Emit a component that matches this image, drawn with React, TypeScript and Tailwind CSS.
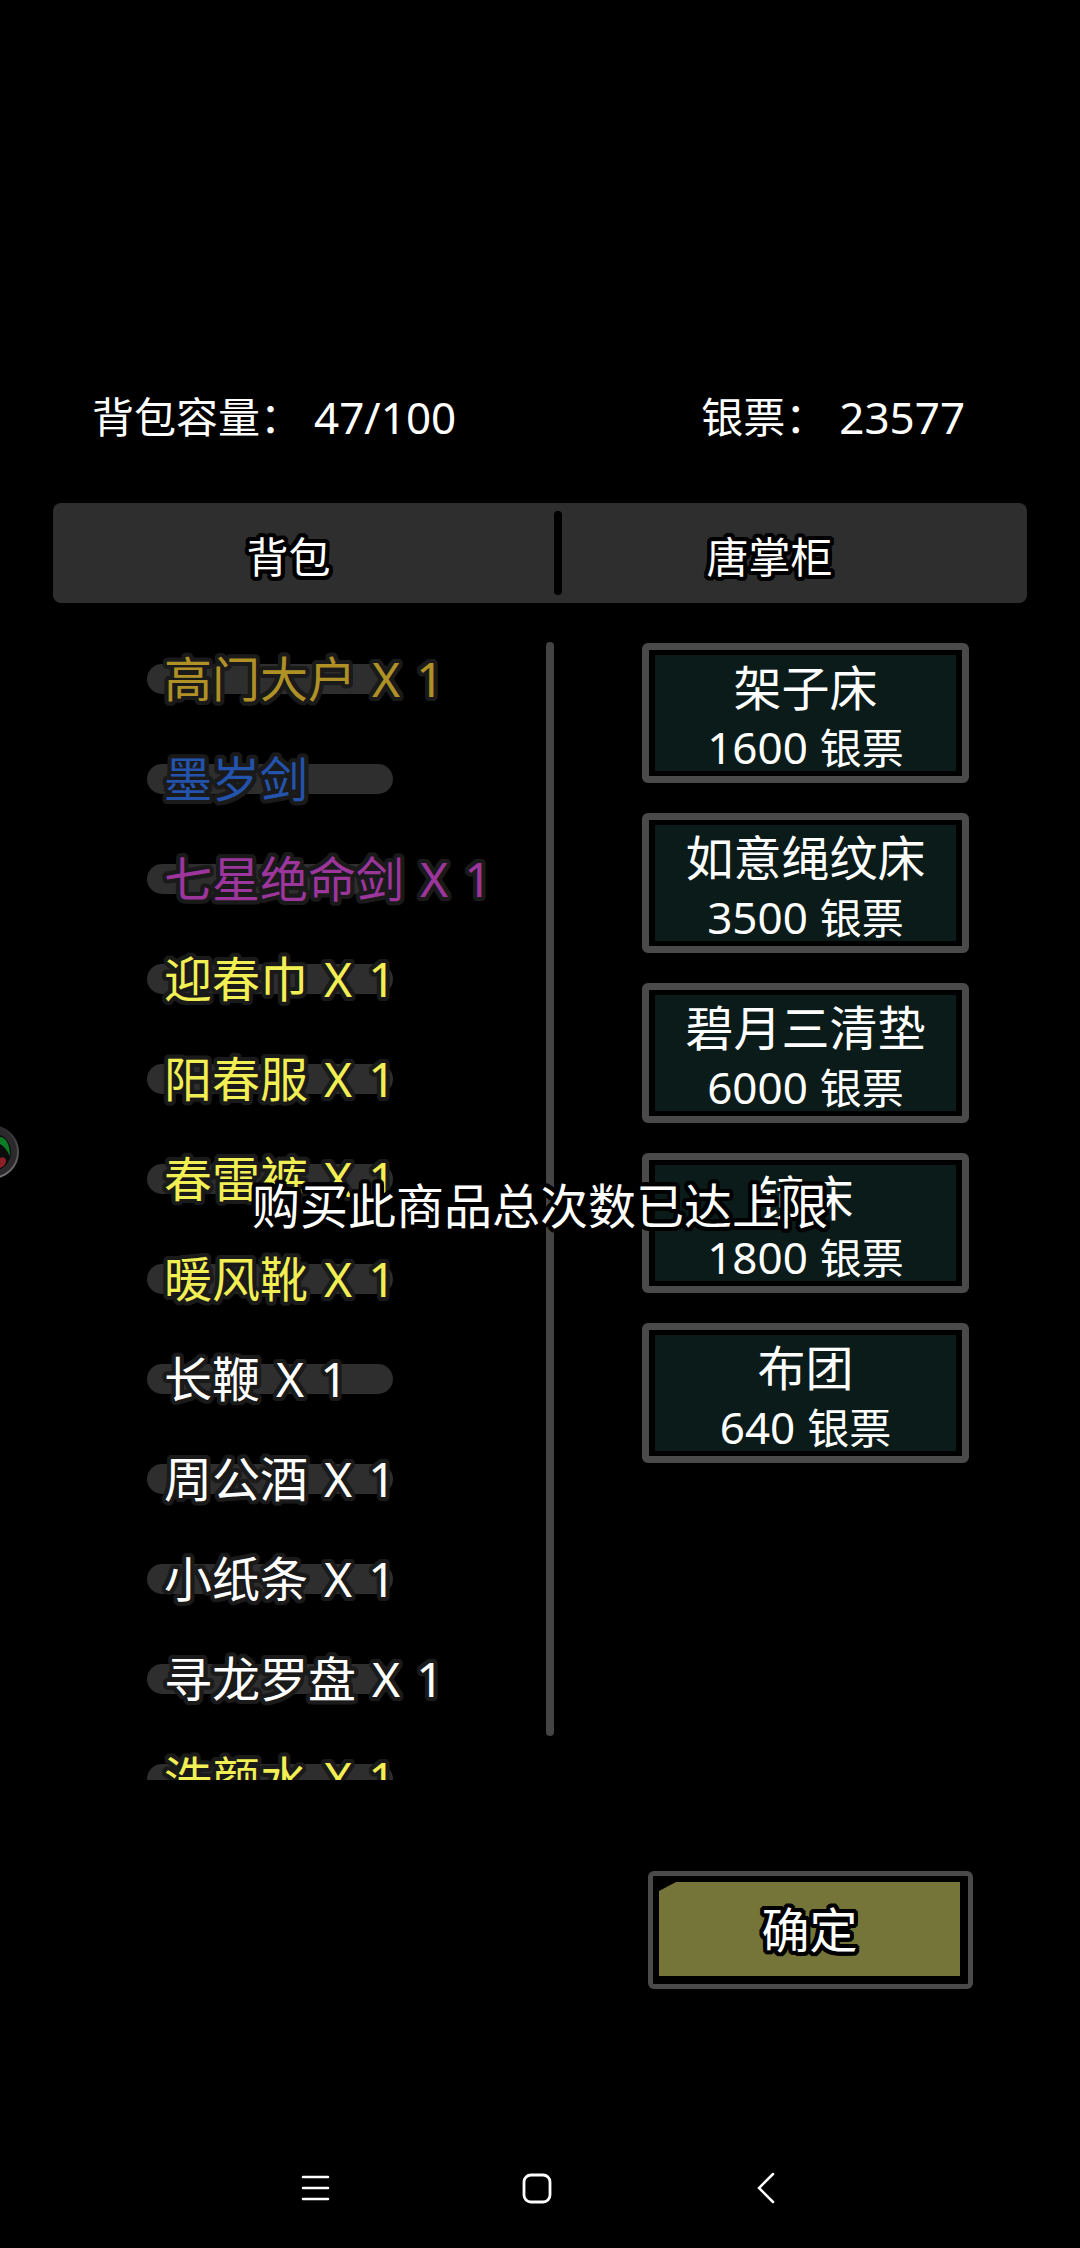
import { ReactNode } from 'react'
import clsx from 'clsx'

type BagItem = { name: string; count?: number; color: string }
type Goods = { name: string; price: number }

const bagItems: BagItem[] = [
  { name: '高门大户', count: 1, color: 'text-[#af9126]' },
  { name: '墨岁剑', color: 'text-[#2453ac]' },
  { name: '七星绝命剑', count: 1, color: 'text-[#9c359c]' },
  { name: '迎春巾', count: 1, color: 'text-[#f2ef55]' },
  { name: '阳春服', count: 1, color: 'text-[#f2ef55]' },
  { name: '春雷裤', count: 1, color: 'text-[#f2ef55]' },
  { name: '暖风靴', count: 1, color: 'text-[#f2ef55]' },
  { name: '长鞭', count: 1, color: 'text-white' },
  { name: '周公酒', count: 1, color: 'text-white' },
  { name: '小纸条', count: 1, color: 'text-white' },
  { name: '寻龙罗盘', count: 1, color: 'text-white' },
  { name: '洗颜水', count: 1, color: 'text-[#f2ef55]' },
]

const goods: Goods[] = [
  { name: '架子床', price: 1600 },
  { name: '如意绳纹床', price: 3500 },
  { name: '碧月三清垫', price: 6000 },
  { name: '镜床', price: 1800 },
  { name: '布团', price: 640 },
]

// rounded outline made of hard shadows, coloured by --edge
const outline =
  '[text-shadow:4px_0_var(--edge),-4px_0_var(--edge),0_4px_var(--edge),0_-4px_var(--edge),3px_3px_var(--edge),-3px_3px_var(--edge),3px_-3px_var(--edge),-3px_-3px_var(--edge),4px_2px_var(--edge),-4px_2px_var(--edge),4px_-2px_var(--edge),-4px_-2px_var(--edge),2px_4px_var(--edge),-2px_4px_var(--edge),2px_-4px_var(--edge),-2px_-4px_var(--edge),2px_0_var(--edge),-2px_0_var(--edge),0_2px_var(--edge),0_-2px_var(--edge)]'

function Stat({ label, value }: { label: string; value: string }) {
  return (
    <p className="flex gap-3">
      <span>{label}</span>
      <span className="text-[44px]">{value}</span>
    </p>
  )
}

function Tab({ className, children }: { className: string; children: ReactNode }) {
  return (
    <button
      type="button"
      className={clsx('flex-1 pt-1.5 text-[42px] [--edge:#000]', outline, className)}
    >
      {children}
    </button>
  )
}

function BagRow({ item }: { item: BagItem }) {
  return (
    <li className="flex h-25 items-center">
      <button
        type="button"
        className={clsx(
          'flex h-[30px] w-[246px] items-center gap-4 rounded-full bg-[#2e2e2e] pl-[17px] text-[48px] whitespace-nowrap [--edge:#1a1a1a]',
          outline,
          item.color
        )}
      >
        <span>{item.name}</span>
        {item.count && (
          <>
            <span>X</span>
            <span>{item.count}</span>
          </>
        )}
      </button>
    </li>
  )
}

function GoodsCard({ item }: { item: Goods }) {
  return (
    <li>
      <button
        type="button"
        className="block w-full rounded-md border-[7px] border-[#4a4a4a] px-1.5 py-[5px]"
      >
        <span className="block h-[116px] bg-[#0a1b19] pt-[3px]">
          <span className="block text-[48px] leading-[60px]">{item.name}</span>
          <span className="flex items-baseline justify-center gap-3 text-[42px] leading-[58px]">
            <span className="text-[44px]">{item.price}</span>
            <span>银票</span>
          </span>
        </span>
      </button>
    </li>
  )
}

function Toast({ children }: { children: ReactNode }) {
  return (
    <div
      role="status"
      className={clsx(
        'pointer-events-none absolute inset-x-0 top-[1170px] text-center text-[48px] leading-[72px] [--edge:#000]',
        outline
      )}
    >
      {children}
    </div>
  )
}

function FloatingBall() {
  return (
    <button
      type="button"
      aria-label="悬浮球"
      className="absolute top-[1124px] left-0"
    >
      <svg width="20" height="56" viewBox="0 0 20 56">
        <defs>
          <linearGradient id="rim" x1="0" y1="0" x2="0" y2="1">
            <stop offset="0" stopColor="#2a2a2a" />
            <stop offset="1" stopColor="#777" />
          </linearGradient>
        </defs>
        <circle cx="-8" cy="28" r="26" fill="#2b292b" stroke="url(#rim)" strokeWidth="2" />
        <circle cx="-8" cy="28" r="19" fill="#0c0c0c" />
        <path d="M0 13c5 0 10 6 10 19C7 26 4 22 0 20z" fill="#0c7d26" />
        <path d="M0 34c3-2 6 0 6 3s-3 6-6 7z" fill="#8c1f27" />
      </svg>
    </button>
  )
}

function SystemNav() {
  return (
    <nav className="mt-auto flex justify-between pr-[300px] pb-[43px] pl-[300px]">
      <button type="button" aria-label="菜单">
        <svg width="32" height="34" fill="none" stroke="#fff" strokeWidth="2.5" strokeLinecap="round">
          <path d="M3 6h25M3 17h25M3 28h25" />
        </svg>
      </button>
      <button type="button" aria-label="主页">
        <svg width="34" height="34" fill="none" stroke="#fff" strokeWidth="2.8">
          <rect x="4" y="4" width="26" height="27" rx="7" />
        </svg>
      </button>
      <button type="button" aria-label="返回">
        <svg width="38" height="34" fill="none" stroke="#fff" strokeWidth="2.5" strokeLinecap="round">
          <path d="M31 3L17 17l14 14" />
        </svg>
      </button>
    </nav>
  )
}

export default function App() {
  return (
    <div className="relative flex min-h-screen flex-col overflow-hidden bg-black font-['Noto_Sans','Noto_Sans_CJK_SC',sans-serif] text-white">
      <header className="mt-[384px] flex px-[92px] text-[42px] leading-[66px]">
        <div className="w-[68%]">
          <Stat label="背包容量：" value="47/100" />
        </div>
        <Stat label="银票：" value="23577" />
      </header>

      <div className="mx-[53px] mt-[53px] flex h-25 rounded-lg bg-[#2e2e2e] py-2">
        <div className="flex w-[501px]">
          <Tab className="pr-[30px]">背包</Tab>
        </div>
        <div className="w-2 rounded-full bg-black" />
        <Tab className="pr-[50px]">唐掌柜</Tab>
      </div>

      <main className="mr-[111px] ml-[147px] flex pt-[26px]">
        <ul className="max-h-[1151px] flex-1 overflow-hidden">
          {bagItems.map((item) => (
            <BagRow key={item.name} item={item} />
          ))}
        </ul>
        <div className="mt-[13px] mb-[44px] w-2 rounded-full bg-[#444]" />
        <ul className="mt-3.5 ml-[88px] flex w-[327px] flex-col gap-[30px]">
          {goods.map((item) => (
            <GoodsCard key={item.name} item={item} />
          ))}
        </ul>
      </main>

      <button
        type="button"
        className="mt-[91px] mr-[107px] w-[325px] self-end rounded-md border-[5px] border-[#4a4a4a] pt-1.5 pr-2 pb-2 pl-1.5"
      >
        <span
          className={clsx(
            'block bg-[#757539] pt-0.5 text-[48px] leading-[92px] [--edge:#000] [clip-path:polygon(17px_0,100%_0,100%_100%,0_100%,0_9px)]',
            outline
          )}
        >
          确定
        </span>
      </button>

      <SystemNav />
      <Toast>购买此商品总次数已达上限</Toast>
      <FloatingBall />
    </div>
  )
}
